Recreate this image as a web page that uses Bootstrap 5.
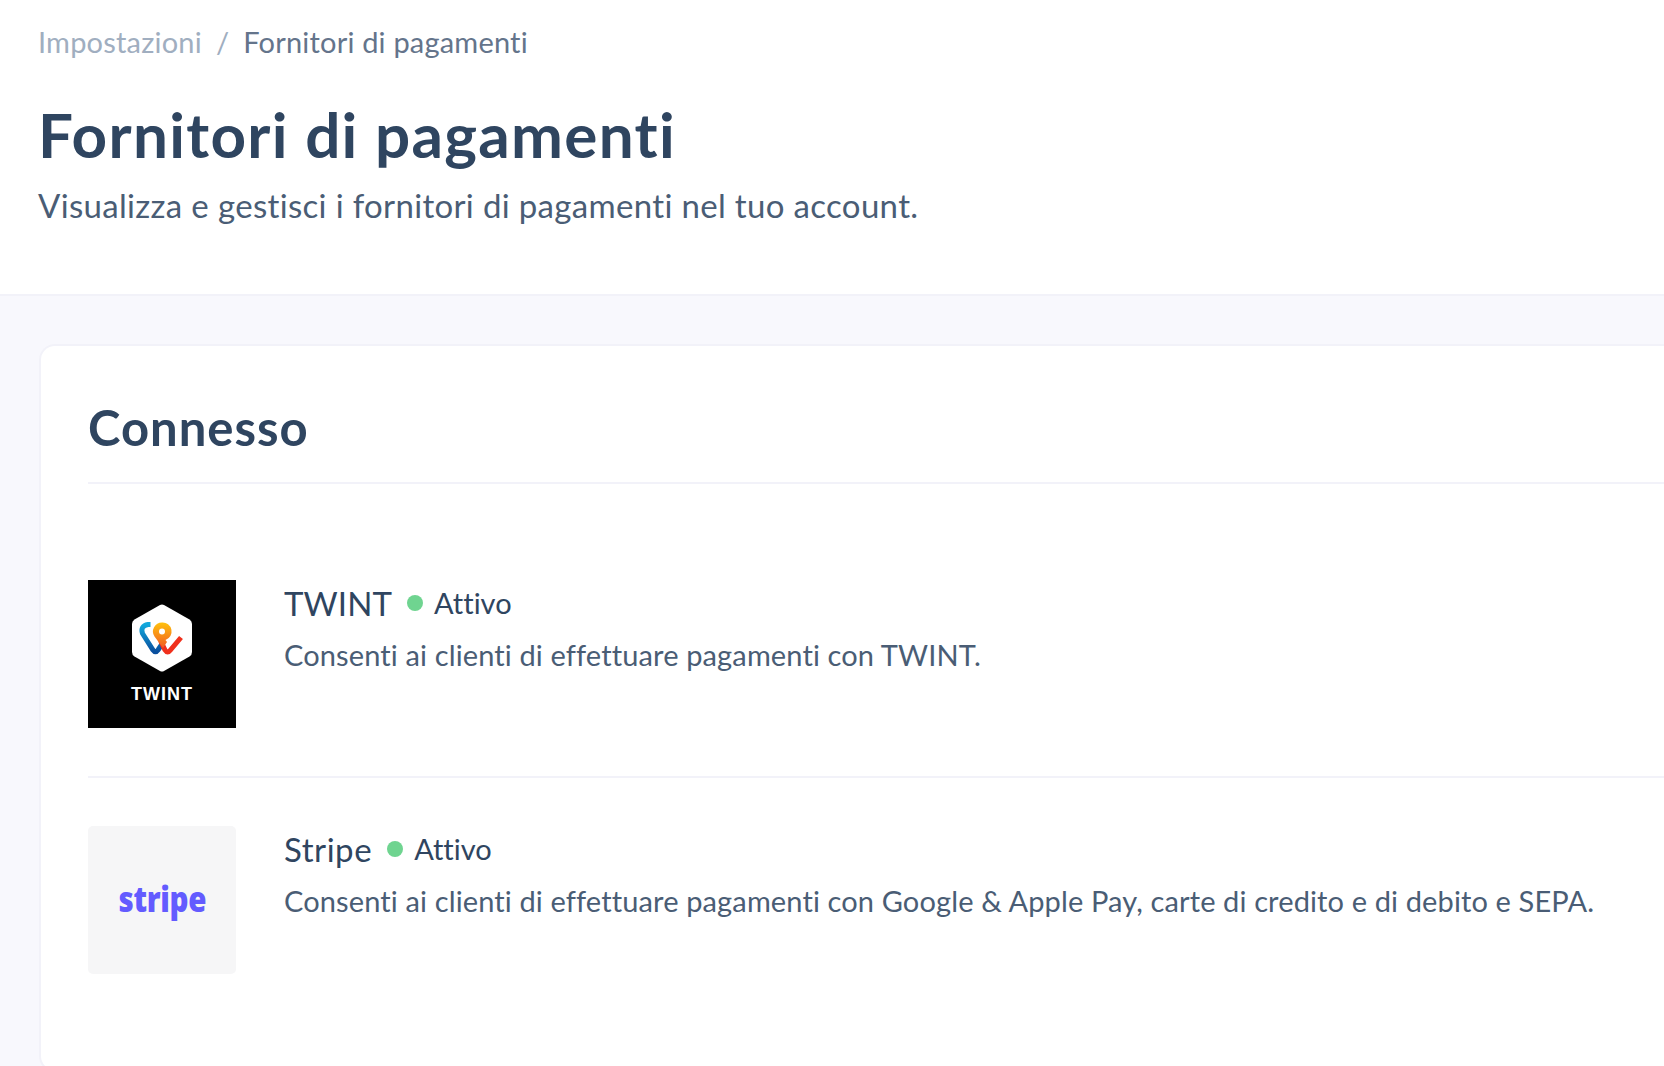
<!doctype html>
<html lang="it"><head><meta charset="utf-8">
<link href="https://cdn.jsdelivr.net/npm/bootstrap@5.3.0/dist/css/bootstrap.min.css" rel="stylesheet">
<style>
html,body{height:100%;overflow:hidden}
body{font-family:"Lato","Liberation Sans",sans-serif;font-variant-ligatures:none;background:#f8f8fd;color:#334960}
.top-pane{background:#fff;border-bottom:2px solid #f2f2f9;height:296px;padding:23px 38px 0}
.crumbs{font-size:29px;line-height:38px;color:#64748b;margin:0;letter-spacing:.2px}
.crumbs .muted{color:#a0aec0}
.crumbs .sep{color:#a0aec0;margin:0 14px}
.page-title{font-size:62px;line-height:72px;font-weight:700;color:#2f4560;margin:37px 0 0;letter-spacing:1.3px}
.page-sub{font-size:33px;line-height:40px;color:#4a5d75;margin:15px 0 0;letter-spacing:.33px}
.body-pane{padding:48px 0 0 39px;height:770px;overflow:hidden}
.main-card{background:#fff;border:2px solid #f2f2f9;border-right:0;border-radius:16px 0 0 16px;padding:53px 0 48px 47px}
.card-title{font-size:49px;line-height:56px;font-weight:700;color:#2f4560;margin:0;padding-bottom:27px;border-bottom:2px solid #f2f2f9;letter-spacing:1px}
.prov-list{margin-top:48px}
.prov{display:flex;gap:48px;padding:48px 0}
.prov+.prov{border-top:2px solid #f2f2f9}
.logo-box{width:148px;height:148px;flex:none;display:flex;flex-direction:column;align-items:center;justify-content:center}
.logo-twint{background:#000}
.logo-stripe{background:#f6f6f7;border-radius:5px}
.twint-word{color:#fff;font-family:"Liberation Sans",sans-serif;font-weight:700;font-size:18px;line-height:20px;letter-spacing:1px;margin-top:12px}
.stripe-word{color:#635bff;font-family:"Open Sans",sans-serif;font-weight:800;font-size:36px;line-height:44px;letter-spacing:-.4px;padding-bottom:3px;transform:scaleX(.82)}
.prov-name{font-size:33px;line-height:44px;color:#2f4560;letter-spacing:.1px}
.name-wide{letter-spacing:.55px}
.prov-state{font-size:29px;line-height:44px;color:#2f4560}
.dot{width:16px;height:16px;border-radius:50%;background:#6fd490}
.name-row{gap:11px;padding-top:1px}
.prov-desc{font-size:29px;line-height:40px;color:#4a5d75;margin:10px 0 0;letter-spacing:.13px}
</style></head><body>
<header class="top-pane">
<p class="crumbs"><span class="muted">Impostazioni</span><span class="sep">/</span>Fornitori di pagamenti</p>
<h1 class="page-title">Fornitori di pagamenti</h1>
<p class="page-sub">Visualizza e gestisci i fornitori di pagamenti nel tuo account.</p>
</header>
<main class="body-pane"><section class="main-card">
<h2 class="card-title">Connesso</h2>
<div class="prov-list">
<div class="prov"><div class="logo-box logo-twint">
<svg width="60" height="68" viewBox="0 0 60 68"><defs>
<linearGradient id="gb" x1="0" y1="0" x2="0" y2="1"><stop offset="0" stop-color="#12a8dc"/><stop offset="1" stop-color="#0a4f9e"/></linearGradient>
<linearGradient id="go" x1="0" y1="0" x2="0" y2="1"><stop offset="0" stop-color="#ffc20e"/><stop offset="1" stop-color="#f15a22"/></linearGradient></defs>
<path d="M28 1 2.500 15.500Q0 17 0 20V48Q0 51 2.500 52.500L28 67Q30 68 32 67L57.500 52.500Q60 51 60 48V20Q60 17 57.500 15.500L32 1Q30 0 28 1Z" fill="#fff"/>
<path d="M18.500 20.500H16Q8 22 10.500 29.500L21 46Q23.500 49.500 26 46L30 40" fill="none" stroke="url(#gb)" stroke-width="5"/>
<path d="M28.500 36.500 33 46Q35.500 50 38.500 46L49 33.500" fill="none" stroke="#f0301c" stroke-width="5"/>
<path fill-rule="evenodd" fill="url(#go)" d="M30 18.500A9 9 0 0 0 22.500 32.500L31 44 35 38 33.500 36A9 9 0 0 0 30 18.500ZM30 24.500A3 3 0 1 1 30 30.500 3 3 0 1 1 30 24.500Z"/></svg>
<div class="twint-word">TWINT</div></div>
<div><div class="d-flex align-items-center name-row"><span class="prov-name me-1">TWINT</span><span class="dot"></span><span class="prov-state">Attivo</span></div><p class="prov-desc">Consenti ai clienti di effettuare pagamenti con TWINT.</p></div></div>
<div class="prov"><div class="logo-box logo-stripe"><div class="stripe-word">stripe</div></div>
<div><div class="d-flex align-items-center name-row"><span class="prov-name name-wide me-1">Stripe</span><span class="dot"></span><span class="prov-state">Attivo</span></div><p class="prov-desc">Consenti ai clienti di effettuare pagamenti con Google &amp; Apple Pay, carte di credito e di debito e SEPA.</p></div></div>
</div>
</section></main>
<script src="https://cdn.jsdelivr.net/npm/bootstrap@5.3.0/dist/js/bootstrap.bundle.min.js"></script>
</body></html>
